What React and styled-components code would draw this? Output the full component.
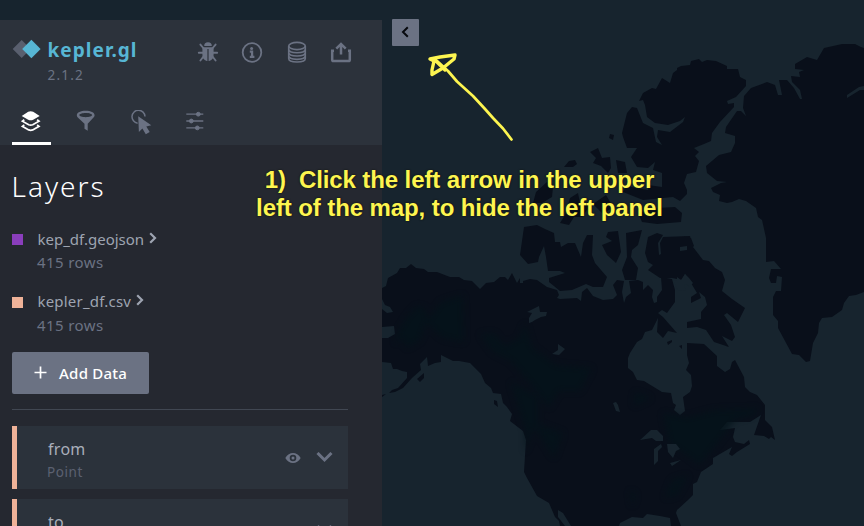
import React from "react";
import styled, { createGlobalStyle } from "styled-components";

const c = {
  sea: "#17242e",
  land: "#090f1a",
  forest: "#04131a",
  header: "#2c323b",
  panel: "#252830",
  card: "#2b323b",
  muted: "#6b7283",
  dim: "#5b6171",
  text: "#9ea4b1",
  accent: "#57b6d4",
  peach: "#efb298",
  purple: "#8a3ebc",
  marker: "#fdf550",
};

const GlobalStyle = createGlobalStyle`
  * { box-sizing: border-box; }
  body { margin: 0; background: ${c.sea}; font-family: "Noto Sans", "Open Sans", sans-serif; }
  svg { display: block; flex: none; }
`;

const Screen = styled.main`
  position: relative;
  width: 864px;
  height: 526px;
  overflow: hidden;
  background: ${c.sea};
`;

const MapCanvas = styled.svg`
  position: absolute;
  inset: 0;
`;

const Workspace = styled.div`
  position: relative;
  display: flex;
  align-items: flex-start;
  gap: 10px;
  padding-top: 20px;
  height: 100%;
`;

const Panel = styled.aside`
  width: 382px;
  height: 506px;
  overflow: hidden;
  background: ${c.panel};
`;

const Header = styled.header`
  display: flex;
  flex-direction: column;
  justify-content: space-between;
  height: 125px;
  padding: 18px 0 0 11.5px;
  background: ${c.header};
`;

const TitleBar = styled.div`
  display: flex;
  align-items: flex-start;
`;

const Logo = styled.div`
  display: grid;
  grid-template-columns: 29px auto;
  column-gap: 7px;
  width: 185.5px;
`;

const Brand = styled.div`
  height: 26px;
  font-size: 19px;
  font-weight: 700;
  line-height: 25px;
  letter-spacing: 1.05px;
  color: ${c.accent};
`;

const Version = styled.div`
  grid-column: 2;
  font-size: 13.5px;
  line-height: 23px;
  letter-spacing: 1.2px;
  color: ${c.muted};
`;

const Actions = styled.div`
  display: flex;
  gap: 22.3px;
  padding-top: 3px;
`;

const Tabs = styled.nav`
  display: flex;
  gap: 16px;
`;

const Tab = styled.div`
  display: flex;
  justify-content: center;
  align-items: flex-start;
  width: 39px;
  height: 38px;
  padding-top: 3px;
  border-bottom: 3px solid ${(p) => (p.$active ? "#fff" : "transparent")};
`;

const Body = styled.section`
  padding: 22px 34px 0 11.5px;
`;

const Heading = styled.h1`
  margin: 0;
  height: 60px;
  font-size: 28px;
  font-weight: 300;
  line-height: 38px;
  letter-spacing: 2px;
  color: #fff;
`;

const Dataset = styled.div`
  display: grid;
  grid-template-columns: 11px auto;
  grid-template-rows: 23px 24px;
  align-content: start;
  column-gap: 15px;
  height: 62.5px;
`;

const Swatch = styled.span`
  width: 11px;
  height: 11px;
  margin-top: 7px;
  background: ${(p) => p.$color};
`;

const DatasetName = styled.div`
  display: flex;
  align-items: center;
  gap: 5px;
  font-size: 15px;
  letter-spacing: ${(p) => p.$spacing}px;
  color: ${c.text};
`;

const RowCount = styled.div`
  grid-column: 2;
  font-size: 15px;
  line-height: 25px;
  letter-spacing: 0.4px;
  margin-left: -0.5px;
  color: ${c.muted};
`;

const AddButton = styled.button`
  display: flex;
  align-items: center;
  gap: 12.5px;
  width: 137px;
  height: 42px;
  margin: 0;
  padding: 0 0 1px 22px;
  border: 0;
  border-radius: 2px;
  background: ${c.muted};
  color: #fff;
  font: 500 15px/40px "Noto Sans", sans-serif;
  letter-spacing: 0.25px;
`;

const Divider = styled.hr`
  height: 1px;
  margin: 15px 0 16px;
  border: 0;
  background: #414752;
`;

const LayerCard = styled.article`
  display: flex;
  align-items: center;
  height: 63px;
  margin-bottom: 10px;
  padding: 0 15px 0 32px;
  border-left: 5px solid ${c.peach};
  background: ${c.card};
`;

const LayerText = styled.div`
  flex: 1;
  padding-top: 6px;
`;

const LayerName = styled.div`
  font-size: 16px;
  line-height: 23px;
  letter-spacing: 0.3px;
  margin-left: -0.5px;
  color: #a9aeba;
`;

const LayerKind = styled.div`
  font-size: 13.5px;
  line-height: 22px;
  letter-spacing: 0.6px;
  margin-left: -1.5px;
  color: ${c.dim};
`;

const LayerTools = styled.div`
  display: flex;
  align-items: center;
  gap: 15px;
`;

const CollapseButton = styled.button`
  display: grid;
  place-items: center;
  width: 27px;
  height: 27px;
  margin-top: -1px;
  padding: 0 2px 1px 0;
  border: 0;
  border-radius: 1px;
  background: ${c.muted};
`;

const Annotation = styled.p`
  position: absolute;
  left: 239px;
  top: 166px;
  width: 441px;
  margin: 0;
  font: 700 24px/28px "Liberation Sans", Arial, sans-serif;
  letter-spacing: ${(p) => p.$spacing}px;
  text-align: center;
  white-space: pre;
  color: ${c.marker};
  text-shadow: 0 0 2px #15160f, 0 0 1px #15160f;
`;

const ArrowSketch = styled.svg`
  position: absolute;
  left: 420px;
  top: 45px;
`;

const LAND = [
  // Mainland
  "M382 288L386 286 388 278 397 273 400 268 406 268 411 264 416 268 424 269 428 272 437 272 450 277 459 277 464 280 472 281 480 289 486 283 494 282 500 277 505 277 508 280 512 273 517 283 520 278 520 283 523 283 523 281 530 279 537 280 547 287 557 290 559 295 557 298 560 299 577 298 581 301 582 292 587 288 593 296 603 300 613 299 617 295 613 285 617 280 624 281 622 292 624 303 626 297 631 293 629 281 638 280 643 282 643 290 648 285 653 290 652 297 654 303 657 302 657 297 662 290 661 277 672 279 675 290 675 302 667 313 662 310 658 313 663 317 677 333 668 331 663 338 657 332 658 318 652 330 645 332 642 339 637 342 630 353 628 358 628 368 633 372 637 380 644 381 662 392 671 393 673 403 676 405 674 410 680 415 685 411 683 397 690 392 692 386 691 375 686 370 689 363 687 355 687 343 704 344 717 356 717 366 725 372 730 369 732 362 735 360 744 377 745 387 750 392 757 395 765 405 765 420 772 427 775 440 771 437 769 439 764 436 754 435 761 415 750 422 727 422 720 430 735 428 733 437 735 442 744 444 749 440 750 444 737 452 732 456 729 454 732 447 713 458 713 464 701 472 697 482 693 484 693 495 688 500 677 510 676 513 681 526 671 526 670 518 660 516 647 514 643 518 632 517 620 523 619 526 571 526 563 513 558 510 558 517 565 526 560 526 559 521 555 517 549 503 537 496 527 478 524 472 526 440 523 431 510 421 512 414 507 407 503 403 501 394 493 393 491 388 485 383 481 374 470 363 459 361 453 361 441 355 441 362 435 363 428 366 427 357 420 364 421 370 412 378 403 388 395 392 389 393 392 390 398 388 407 378 407 372 402 371 397 369 393 369 391 363 382 362 382 338 388 338 395 334 394 326 382 327 382 309 387 313 393 312 390 307 385 305 382 299Z",
  // Ellesmere, Axel Heiberg and Devon
  "M639 101L643 93 652 88 656 89 662 78 670 83 673 73 677 70 677 68 681 66 690 65 691 61 699 59 702 62 707 60 716 61 727 66 727 69 738 69 740 77 746 80 746 86 736 97 727 101 728 104 734 103 734 107 720 122 712 133 711 141 704 144 694 148 699 152 695 156 699 161 696 172 687 174 684 183 687 190 687 194 680 201 673 197 643 200 623 192 626 186 648 190 648 185 662 187 662 173 653 170 655 162 648 168 637 167 631 157 637 148 627 148 623 137 622 133 627 113 632 107 637 108 643 123 653 128 656 142 662 145 657 137 658 130 670 132 683 122 685 117 680 121 668 125 655 123 647 117 645 105 643 100Z",
  // Greenland
  "M744 96L751 88 767 82 775 85 778 95 782 95 779 80 787 80 794 88 800 99 802 99 800 90 792 82 791 76 800 77 799 72 804 70 795 69 795 64 807 57 817 60 824 48 842 44 855 44 861 47 864 48 864 292 856 295 849 296 844 303 842 310 832 317 822 318 819 323 818 333 813 343 810 361 806 362 799 355 792 354 778 328 778 321 773 315 773 297 776 291 781 291 782 277 777 276 776 283 771 283 769 278 771 269 781 269 774 261 766 262 766 238 762 220 758 217 756 208 746 201 739 199 732 202 727 203 719 201 720 195 713 192 711 188 721 183 727 182 717 181 707 173 706 166 719 155 731 152 735 143 735 136 725 133 726 127 737 111 741 111 746 116 743 108Z",
  // Baffin
  "M663 237L690 236 693 247 703 260 709 261 715 268 722 272 725 280 722 291 732 299 745 308 738 322 727 313 724 315 731 325 735 337 732 341 722 336 729 347 714 342 706 330 697 327 687 328 687 322 701 319 701 312 707 305 705 297 699 292 701 298 691 303 691 297 697 293 691 283 685 274 682 280 672 278 660 278 648 270 653 265 648 262 645 253 648 237 657 233 663 235 658 243 659 255 661 254 660 243Z",
  // Banks and Victoria
  "M524 227L537 225 545 229 554 233 555 242 560 242 561 247 568 243 575 243 581 257 583 243 587 235 593 235 592 255 595 263 607 277 603 287 593 287 586 284 572 290 560 291 549 282 549 278 565 273 560 271 548 271 546 257 544 246 539 257 538 262 528 264 520 255Z",
  "M602 245L612 241 606 237 608 232 618 231 621 252 616 263 607 255Z",
  "M626 233L642 230 638 245 632 250 631 257 638 268 636 280 625 280 622 270 627 257Z",
  "M590 152L598 148 602 158 610 157 611 168 608 173 601 166 593 163 596 158Z",
  "M610 134L614 135 613 140 609 138Z",
  "M564 167L569 161 575 160 577 164 573 167Z",
  "M533 203L536 192 547 182 553 187 552 197 542 203Z",
  "M616 160L625 162 627 173 618 173Z",
  "M570 198L578 193 580 203 591 204 582 217 574 217 569 225 560 223 565 215Z",
  "M593 204L606 195 613 207 603 214Z",
  "M638 213L657 208 675 207 682 213 681 222 657 224 642 222Z",
  "M417 379L424 373 424 378 420 382Z",
  "M494 400L497 401 498 407 494 404Z",
  "M667 342L672 340 672 342 668 345ZM679 346L682 345 682 349Z",
  "M684 236L691 238 694 246 690 250 684 247Z",
  "M382 395L386 394 382 397Z",
].join("");

const WATER = [
  "M527 312L539 306 540 312 547 312 546 316 541 317 535 320 532 322 529 323 529 318 532 313Z",
  "M552 354L558 350 558 344 565 349 559 355Z",
  "M613 403L616 402 618 405 620 412 616 411Z",
  "M640 440L651 430 657 430 663 436 663 441 656 441 652 438Z",
  "M654 449L661 444 662 447 658 451 658 461 654 465Z",
  "M667 444L676 444 680 449 676 451 673 458 668 452Z",
  "M670 463L681 460 672 466Z",
  "M680 247L687 246 687 250 680 251Z",
  "M847 95L859 87 864 86 864 90 860 90 847 98Z",
  "M673 281L677 280 677 277 681 280 685 274 689 278 693 283 689 287 687 284 684 285 686 291 678 290Z",
].join("");

const FOREST = [
  "M407 317L417 306 425 308 428 320 441 302 463 295 464 342 443 338 426 323 420 340 407 348 402 338 395 344 399 330Z",
  "M480 334L494 333 505 346 519 338 525 323 532 347 556 365 592 368 580 391 559 391 549 408 529 382 511 361 493 352Z",
  "M511 382L538 396 538 424 563 433 554 458 534 426 525 453 525 429Z",
  "M635 392L651 398 634 406ZM663 413L688 417 714 410 745 409 758 408 755 415 735 420 712 450 700 465 685 454 669 443Z",
  "M672 480L688 475 677 495 665 498ZM630 490L636 495 632 507Z",
].join("");

function WorldMap() {
  return (
    <MapCanvas width="864" height="526" viewBox="0 0 864 526">
      <defs>
        <filter id="soft" colorInterpolationFilters="sRGB"><feGaussianBlur stdDeviation="3" /></filter>
      </defs>
      <path d={LAND} fill={c.land} />
      <path d={FOREST} fill={c.forest} filter="url(#soft)" opacity="0.75" />
      <path d={WATER} fill={c.sea} />
    </MapCanvas>
  );
}

const LogoMark = () => (
  <svg width="29" height="22" viewBox="-0.7 0 29 22">
    <path d="M0 11l9-9 9 9-9 9z" fill="#595f6e" />
    <path d="M9.500 11l9.200-9.200 9.200 9.200-9.200 9.200z" fill={c.accent} />
  </svg>
);

const BugIcon = () => (
  <svg width="22" height="22" viewBox="0 0 22 22" fill="none" stroke={c.muted} strokeWidth="1.9" strokeLinecap="round">
    <path d="M7.200 4.900a3.800 3.700 0 0 1 7.600 0z" fill={c.muted} stroke="none" />
    <path d="M5.400 6.200h11.200v7.500c0 3.900-2.200 6.300-5.600 6.300s-5.600-2.400-5.600-6.300z" fill={c.muted} stroke="none" />
    <path d="M11 8v12" stroke={c.header} strokeWidth="1.200" strokeLinecap="butt" />
    <path d="M3.400 3.600L6.700 7.500M18.600 3.600L15.300 7.500M1.800 11.800h4M16.200 11.800h4M6.500 15.500l-3.100 4M15.500 15.500l3.100 4" />
  </svg>
);

const InfoIcon = () => (
  <svg width="22" height="22" viewBox="0 0 22 22" fill="none" stroke={c.muted}>
    <circle cx="11" cy="11.500" r="9.300" strokeWidth="1.800" />
    <circle cx="10.600" cy="7.400" r="1.500" fill={c.muted} stroke="none" />
    <path d="M8.800 10.700h2.300v5M8.800 15.900h4.600" strokeWidth="2.200" />
  </svg>
);

const DatabaseIcon = () => (
  <svg width="22" height="22" viewBox="0 0 22 22" fill="none" stroke={c.muted} strokeWidth="1.600">
    <ellipse cx="11" cy="5" rx="8.300" ry="3.600" />
    <path d="M2.700 5v12.500c0 4.700 16.600 4.700 16.600 0V5M2.700 8c0 5 16.600 5 16.600 0M2.700 11.300c0 5 16.600 5 16.600 0M2.700 14.600c0 5 16.600 5 16.600 0" />
  </svg>
);

const ShareIcon = () => (
  <svg width="22" height="22" viewBox="0 0 22 22" fill="none" stroke={c.muted}>
    <path d="M4 9.800H2.200v8.900q0 1.300 1.300 1.300h15q1.300 0 1.300-1.300V9.800H18" strokeWidth="2.500" />
    <path d="M11 13.500V3.500M6.300 7.600L11 2.900l4.700 4.700" strokeWidth="2.500" />
  </svg>
);

const LayersIcon = () => (
  <svg width="22" height="22" viewBox="0.3 0 22 22">
    <path d="M2 6L8.500 1.700q2.500-1 5 0L20 6l-6.500 3.700q-2.500 1-5 0z" fill="#fff" />
    <path d="M4.600 9.800L2.700 11.200 9 14.800q2 .8 4 0l6.300-3.600-1.900-1.400M4.600 14.900L2.700 16.300 9 19.900q2 .8 4 0l6.300-3.600-1.900-1.400" fill="none" stroke="#fff" strokeWidth="1.700" />
  </svg>
);

const FilterIcon = () => (
  <svg width="22" height="22" viewBox="0.3 0 22 22" fill={c.muted}>
    <path fillRule="evenodd" d="M11 .8c5 0 8.900 1.700 8.900 4.400 0 1.200-.8 2.200-1.800 3L13 13.800v7l-3.200-2V13.800L3.900 8.200c-1-.8-1.800-1.800-1.800-3C2.100 2.500 6 .8 11 .8zm0 2.200c-3.600 0-6.400 1-6.400 2.100S7.400 7.200 11 7.200s6.400-1 6.400-2.100S14.600 3 11 3z" />
  </svg>
);

const PointerIcon = () => (
  <svg width="24" height="26" viewBox="0 1 24 26">
    <path d="M8.600 14.200A6.500 6.500 0 1 1 16 7.500" fill="none" stroke={c.muted} strokeWidth="1.500" />
    <path d="M9.200 7.300l.7 15.600 3.500-3.300 3.400 5.700 3.900-2.200-3.400-5.600 5-1.200z" fill={c.muted} />
  </svg>
);

const SlidersIcon = () => (
  <svg width="22" height="22" viewBox="1.200 0.300 22 22" fill={c.muted} stroke={c.muted}>
    <path d="M2.500 4.500h17M2.500 11.300h17M2.500 18.200h17" strokeWidth="1.300" />
    <circle cx="14.500" cy="4.500" r="1.900" />
    <circle cx="7.500" cy="11.300" r="1.900" />
    <circle cx="13.500" cy="18.200" r="1.900" />
  </svg>
);

const Chevron = () => (
  <svg width="8" height="14" viewBox="0 0 8 14">
    <path d="M1.200 1.200L6 6 1.200 10.800" fill="none" stroke={c.text} strokeWidth="2.200" />
  </svg>
);

const EyeIcon = () => (
  <svg width="16" height="12" viewBox="0 0 16 12">
    <path fillRule="evenodd" d="M.3 6C4.200-.6 11.800-.6 15.700 6 11.800 12.600 4.200 12.600.3 6zM8 2.700a3.300 3.300 0 1 0 0 6.600 3.300 3.300 0 0 0 0-6.600z" fill={c.muted} />
    <circle cx="8" cy="6" r="1.500" fill={c.muted} />
  </svg>
);

const DownIcon = () => (
  <svg width="17" height="12" viewBox="0 0.500 17 12">
    <path d="M1.500 1.500l7 7 7-7" fill="none" stroke={c.muted} strokeWidth="3" />
  </svg>
);

function DatasetItem({ color, name, spacing }) {
  return (
    <Dataset>
      <Swatch $color={color} />
      <DatasetName $spacing={spacing}>
        {name}
        <Chevron />
      </DatasetName>
      <RowCount>415 rows</RowCount>
    </Dataset>
  );
}

function Layer({ name }) {
  return (
    <LayerCard>
      <LayerText>
        <LayerName>{name}</LayerName>
        <LayerKind>Point</LayerKind>
      </LayerText>
      <LayerTools>
        <EyeIcon />
        <DownIcon />
      </LayerTools>
    </LayerCard>
  );
}

export default function App() {
  return (
    <Screen>
      <GlobalStyle />
      <WorldMap />
      <Workspace>
        <Panel>
          <Header>
            <TitleBar>
              <Logo>
                <LogoMark />
                <Brand>kepler.gl</Brand>
                <Version>2.1.2</Version>
              </Logo>
              <Actions>
                <BugIcon />
                <InfoIcon />
                <DatabaseIcon />
                <ShareIcon />
              </Actions>
            </TitleBar>
            <Tabs>
              <Tab $active><LayersIcon /></Tab>
              <Tab><FilterIcon /></Tab>
              <Tab><PointerIcon /></Tab>
              <Tab><SlidersIcon /></Tab>
            </Tabs>
          </Header>
          <Body>
            <Heading>Layers</Heading>
            <DatasetItem color={c.purple} name="kep_df.geojson" spacing={0} />
            <DatasetItem color={c.peach} name="kepler_df.csv" spacing={0.2} />
            <AddButton>
              <svg width="13" height="13" viewBox="0 0 13 13">
                <path d="M6.500 .5v12M.5 6.500h12" stroke="#fff" strokeWidth="1.700" />
              </svg>
              Add Data
            </AddButton>
            <Divider />
            <Layer name="from" />
            <Layer name="to" />
          </Body>
        </Panel>
        <CollapseButton aria-label="Hide panel">
          <svg width="8" height="12" viewBox="0 0 8 12">
            <path d="M6.800 1.200L2 6l4.800 4.800" fill="none" stroke="#07090d" strokeWidth="2" />
          </svg>
        </CollapseButton>
      </Workspace>
      <Annotation $spacing={-0.1}>{"1)  Click the left arrow in the upper\nleft of the map, to hide the left panel"}</Annotation>
      <ArrowSketch width="100" height="102" viewBox="0 0 100 102" fill="none" stroke={c.marker} strokeLinecap="round" strokeLinejoin="round">
        <path d="M91.500 94.500L83 83.500 73 73 65 64 53 51 37 36.500 28 26 17 16" strokeWidth="2.700" />
        <path d="M10 14L20 12 35 10 34 14 23 23 12 29.500 12 25 14 16 10 14M15 15l10 10" strokeWidth="3.400" />
      </ArrowSketch>
    </Screen>
  );
}
